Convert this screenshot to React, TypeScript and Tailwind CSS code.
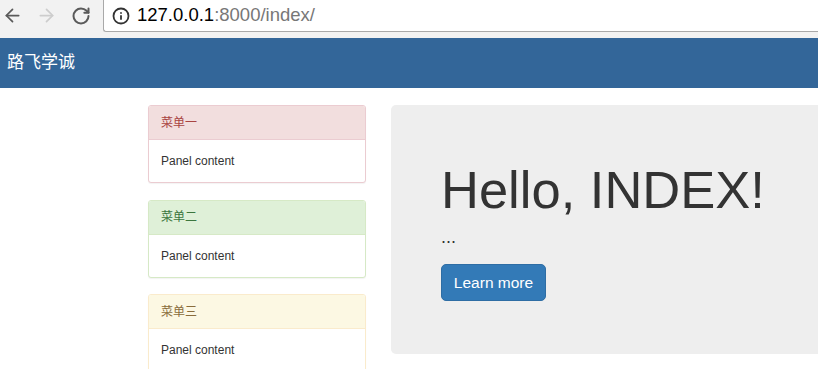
import { ArrowLeft, ArrowRight, RotateCw, Info } from "lucide-react";

const panels = [
    { title: "菜单一", border: "border-[#ebccd1]", head: "bg-[#f2dede] text-[#a94442] border-[#ebccd1]" },
    { title: "菜单二", border: "border-[#d6e9c6]", head: "bg-[#dff0d8] text-[#3c763d] border-[#d6e9c6]" },
    { title: "菜单三", border: "border-[#faebcc]", head: "bg-[#fcf8e3] text-[#8a6d3b] border-[#faebcc]" },
];

function BrowserBar() {
    return (
        <div className="h-[38px] bg-[#f2f2f2] flex items-start">
            <div className="h-[31px] flex items-center">
                <ArrowLeft className="ml-[2px] w-[21px] h-[21px] text-[#5a5a5a]" strokeWidth={2} />
                <ArrowRight className="ml-[13px] w-[21px] h-[21px] text-[#cdcdcd]" strokeWidth={2} />
                <RotateCw className="ml-[14px] w-[20px] h-[20px] text-[#5a5a5a]" strokeWidth={2.4} />
            </div>
            <div className="ml-[12px] flex-1 h-[32px] bg-white border-l border-b border-[#a9a9a9] rounded-bl-[3px] flex items-center">
                <Info className="ml-[8px] w-[18px] h-[18px] text-[#333]" strokeWidth={2.4} />
                <span className="ml-[7px] text-[18.5px] leading-none font-['Liberation_Sans',Arial,sans-serif] text-black">
                    127.0.0.1<span className="text-[#777]">:8000/index/</span>
                </span>
            </div>
        </div>
    );
}

export default function App() {
    return (
        <div className="w-[818px] h-[369px] overflow-hidden bg-white font-['Liberation_Sans','Noto_Sans_CJK_SC',sans-serif] text-[#333]">
            <BrowserBar />

            {/* Navbar */}
            <nav className="h-[50px] bg-[#336699] flex items-center pl-[7px]">
                <span className="text-[17px] text-white font-['Liberation_Sans','Noto_Sans_CJK_SC',sans-serif]">路飞学诚</span>
            </nav>

            <div className="flex items-start pt-[17px] pl-[148px] gap-[25px]">
                {/* Side panels */}
                <div className="w-[218px] shrink-0 flex flex-col gap-[16.5px]">
                    {panels.map((p) => (
                        <div key={p.title} className={`border ${p.border} rounded-[3px] bg-white shadow-[0_1px_1px_rgba(0,0,0,0.05)] overflow-hidden`}>
                            <div className={`h-[34px] border-b ${p.head} px-[12px] flex items-center text-[12px]`}>
                                {p.title}
                            </div>
                            <div className="h-[42px] px-[12px] flex items-center text-[12px] text-[#333]">
                                Panel content
                            </div>
                        </div>
                    ))}
                </div>

                {/* Jumbotron */}
                <div className="w-[480px] h-[249px] shrink-0 bg-[#eeeeee] rounded-[5px] pl-[50px] pt-[56px]">
                    <h1 className="text-[52.5px] leading-[1.1] text-[#333] m-0">Hello, INDEX!</h1>
                    <p className="mt-[6px] text-[18px] leading-[25px] text-[#333]">...</p>
                    <button className="mt-[14px] w-[105px] h-[37px] bg-[#337ab7] border border-[#2e6da4] rounded-[5px] text-white text-[15.5px] flex items-center justify-center">
                        Learn more
                    </button>
                </div>
            </div>
        </div>
    );
}
